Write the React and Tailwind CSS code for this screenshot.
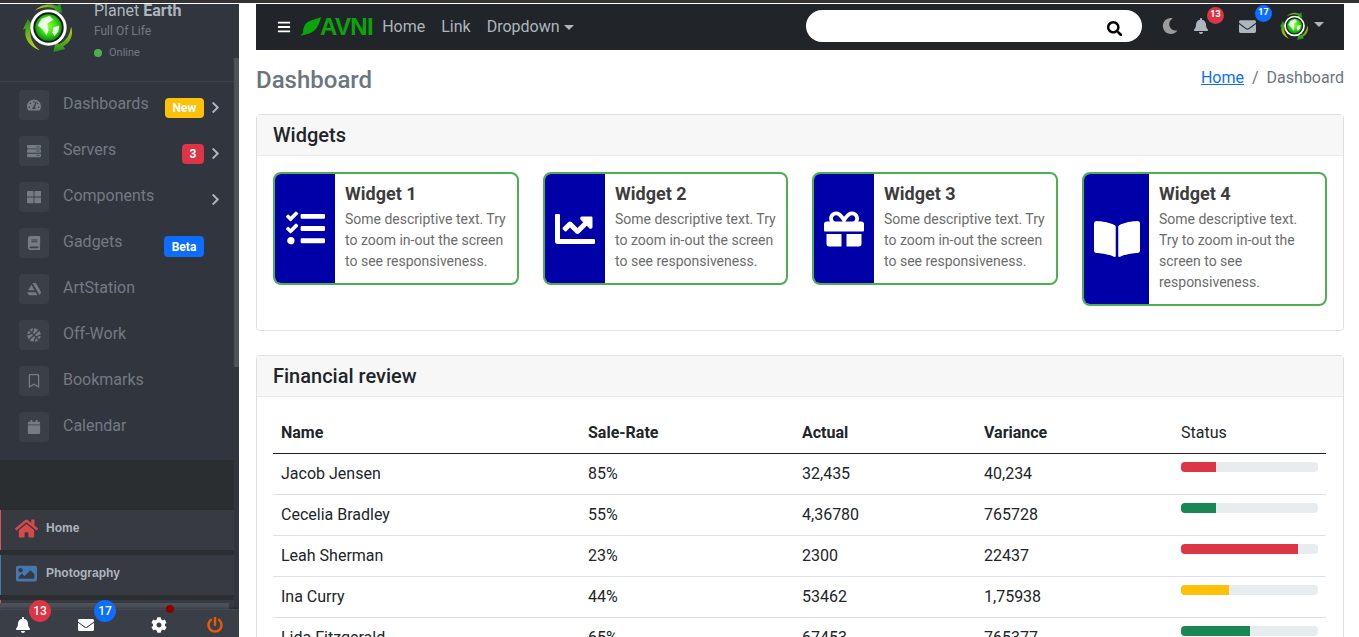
import React from "react";
import { FaBell, FaEnvelope, FaCog, FaPowerOff, FaHome, FaImage, FaMoon, FaSearch, FaTachometerAlt, FaServer, FaThLarge, FaBook, FaArtstation, FaBasketballBall, FaRegBookmark, FaCalendar, FaChevronRight, FaBars, FaTasks, FaChartLine, FaGift, FaBookOpen } from "react-icons/fa";

function Earth({ size }) {
  return (
    <svg width={size} height={size} viewBox="0 0 52 52">
      <defs>
        <radialGradient id="globe" cx="50%" cy="45%" r="55%">
          <stop offset="0%" stopColor="#8dff2e" />
          <stop offset="60%" stopColor="#33d80f" />
          <stop offset="100%" stopColor="#0c8a12" />
        </radialGradient>
        <linearGradient id="blade" x1="0" y1="0" x2="1" y2="0">
          <stop offset="0%" stopColor="#c9d41a" />
          <stop offset="100%" stopColor="#1d8f1d" />
        </linearGradient>
        <linearGradient id="bladeL" x1="0" y1="1" x2="0" y2="0">
          <stop offset="0%" stopColor="#c9d41a" />
          <stop offset="100%" stopColor="#1d8f1d" />
        </linearGradient>
        <linearGradient id="bladeR" x1="0" y1="0" x2="0" y2="1">
          <stop offset="0%" stopColor="#c9d41a" />
          <stop offset="100%" stopColor="#1d8f1d" />
        </linearGradient>
      </defs>
      <path d="M12 8 C18 1 28 0 35 3 L38 0 L40 10 L30 9 L33 6 C26 3 18 4 12 8Z" fill="url(#blade)" />
      <path d="M17 48 C7 45 0 35 3 26 L0 27 L5 16 L11 25 L8 25 C6 34 10 43 17 48Z" fill="url(#bladeL)" />
      <path d="M49 24 C52 33 48 41 41 44 L43 47 L31 50 L33 40 L37 42 C44 39 48 32 49 24Z" fill="url(#bladeR)" />
      <circle cx="26" cy="25" r="18.5" fill="#fff" />
      <circle cx="26" cy="25" r="15.5" fill="#1a1a1a" />
      <circle cx="26" cy="25" r="13.5" fill="url(#globe)" />
      <path d="M19 16 L27 13 L31 17 L25 21 L26 28 L24 33 L20 27 L15 23Z" fill="#eafbe4" />
      <path d="M31 25 L37 23 L36 29 L32 34 L30 30Z" fill="#eafbe4" />
    </svg>
  );
}

const nav = [
  ["Dashboards", FaTachometerAlt, "New", "chev"],
  ["Servers", FaServer, "3", "chev"],
  ["Components", FaThLarge, null, "chev"],
  ["Gadgets", FaBook, "Beta", null],
  ["ArtStation", FaArtstation, null, null],
  ["Off-Work", FaBasketballBall, null, null],
  ["Bookmarks", FaRegBookmark, null, null],
  ["Calendar", FaCalendar, null, null],
];

const badgeCls = {
  New: "bg-[#ffc107] w-[39px] h-5",
  "3": "bg-[#dc3545] w-[22px] h-5",
  Beta: "bg-[#0d6efd] w-10 h-[21px]",
};

function NavItem({ label, Icon, badge, chev }) {
  return (
    <div className="h-[46px] flex items-start pl-[19px] relative">
      <div className="w-[30px] h-[30px] rounded bg-[#3a3f48] flex items-center justify-center text-[#767c85] text-[14px] shrink-0">
        <Icon />
      </div>
      <span className="ml-[14px] text-[16px] leading-[28px] text-[#747a83]">{label}</span>
      <div className="flex-1" />
      {badge && (
        <span className={`${badgeCls[badge]} mt-[8px] rounded text-white font-bold text-[12px] flex items-center justify-center`}>{badge}</span>
      )}
      <span className="w-[30px] pl-[5px] pt-[11px] text-[#adb5bd] text-[13px] h-[30px]">{chev && <FaChevronRight />}</span>
    </div>
  );
}

function Sidebar() {
  return (
    <aside className="w-[239px] shrink-0 h-[633px] bg-[#31353e] relative overflow-hidden flex flex-col">
      <div className="h-[78px] flex shrink-0 pl-[23px] border-b border-[#3d424b]">
        <div className="mt-[-1px]"><Earth size={51} /></div>
        <div className="ml-[20px] mt-[-3px]">
          <div className="text-[16px] leading-[20px] text-[#adb5bd]">Planet <b className="font-bold">Earth</b></div>
          <div className="text-[12px] leading-[16px] mt-[2px] text-[#747a83]">Full Of Life</div>
          <div className="text-[11px] leading-[14px] mt-[7px] text-[#747a83] flex items-center">
            <span className="w-[8px] h-[8px] rounded-full bg-[#4caf50] mr-[7px]" />Online
          </div>
        </div>
      </div>
      <div className="flex-1 flex flex-col pr-[5px] pt-[8px] relative">
        <nav className="flex flex-col">
          {nav.map(([l, I, b, c]) => <NavItem key={l} label={l} Icon={I} badge={b} chev={c} />)}
        </nav>
        <div className="mt-[2px] h-[50px] bg-[#2b2e31] shrink-0" />
        <div className="bg-[#2b2e31] flex flex-col gap-[5px] flex-1">
          <div className="h-[40px] bg-[#373a41] border-l border-[#d9534f] flex items-center pl-[14px] pb-[4px]">
            <FaHome className="text-[#d9484a] text-[23px]" />
            <span className="ml-[8px] text-[12px] font-bold text-[#adb5bd] font-['Liberation_Sans']">Home</span>
          </div>
          <div className="h-[40px] bg-[#373a41] border-l border-[#3d79b4] flex items-center pl-[15px] pb-[4px]">
            <FaImage className="text-[#4279b0] text-[21px]" />
            <span className="ml-[9px] text-[12px] font-bold text-[#adb5bd] font-['Liberation_Sans']">Photography</span>
          </div>
          <div className="flex-1 bg-[#373a41] border-l border-[#d9534f]" />
        </div>
      </div>
      {/* scrollbars */}
      <div className="absolute right-0 top-[54px] w-[5px] h-[309px] bg-[#4d525b]" />
      <div className="absolute left-0 bottom-[28px] w-[229px] h-[6px] bg-[#4d525b]" />
      {/* footer */}
      <div className="absolute left-0 right-0 bottom-0 h-[28px] bg-[#3a3e47] shadow-[0_0_4px_rgba(0,0,0,.5)] border-t border-[#44484f]">
        <FooterIcon left={15} Icon={FaBell} badge="13" bc="bg-[#dc3545]" bl={29} />
        <FooterIcon left={78} Icon={FaEnvelope} badge="17" bc="bg-[#0d6efd]" bl={94} />
        <FooterIcon left={151} Icon={FaCog} />
        <span className="absolute left-[166px] top-[-5px] w-2 h-2 rounded-full bg-[#8b0000]" />
        <FooterIcon left={207} Icon={FaPowerOff} color="text-[#e8590c]" />
      </div>
    </aside>
  );
}

function FooterIcon({ left, Icon, badge, bc, bl, color = "text-white" }) {
  return (
    <>
      <Icon className={`absolute top-[7px] text-[16px] ${color}`} style={{ left }} />
      {badge && (
        <span className={`absolute top-[-10px] w-[22px] h-[22px] rounded-full ${bc} text-white text-[12px] font-medium flex items-center justify-center`} style={{ left: bl }}>{badge}</span>
      )}
    </>
  );
}

function Navbar() {
  return (
    <header className="h-[46px] bg-[#212529] flex items-center text-[#adb5bd] text-[16px] shrink-0">
      <FaBars className="ml-[21px] text-[14px] text-white" />
      <svg className="ml-[9px] shrink-0" width="21" height="20" viewBox="0 0 21 20">
        <path d="M1 19 C5 17 7 15 9 12 C7 15 5 17 3 18 C4 18 5 18 7 17 C14 16 19 10 21 0 C15 3 8 3 5 8 C3 11 3 14 3 16 L1 18Z" fill="#0aa50a" />
      </svg>
      <span className="font-['Liberation_Sans'] font-bold text-[24px] text-[#0aa50a] tracking-[-0.6px] -ml-[1px]">AVNI</span>
      <span className="ml-[9px]">Home</span>
      <span className="ml-[16px]">Link</span>
      <span className="ml-[16px]">Dropdown</span>
      <span className="ml-[4px] border-x-[5px] border-x-transparent border-t-[5px] border-t-[#adb5bd]" />
      <div className="flex-1" />
      <div className="w-[336px] h-8 rounded-full bg-white mr-[20px] mt-[-3px] flex items-center justify-end pr-[20px] text-black text-[15.5px]">
        <FaSearch className="mt-[6px]" />
      </div>
      <FaMoon className="text-[#9b9b9b] text-[16px] mr-[15px] mt-[-3px]" />
      <div className="relative mr-[30px]">
        <FaBell className="text-[#adb5bd] text-[16px] mt-[-3px]" />
        <span className="absolute top-[-14px] left-[14px] w-[17px] h-[17px] rounded-full bg-[#dc3545] text-white text-[9px] font-bold flex items-center justify-center">13</span>
      </div>
      <div className="relative mr-[24px]">
        <FaEnvelope className="text-[#adb5bd] text-[17px] mt-[-2px]" />
        <span className="absolute top-[-15px] left-[16px] w-[17px] h-[17px] rounded-full bg-[#0d6efd] text-white text-[9px] font-bold flex items-center justify-center">17</span>
      </div>
      <div className="mt-[-1px]"><Earth size={29} /></div>
      <span className="ml-[5px] mr-[20px] border-x-[5px] border-x-transparent border-t-[5px] border-t-[#adb5bd] mt-[-6px]" />
    </header>
  );
}

const text = "Some descriptive text. Try to zoom in-out the screen to see responsiveness.";
const widgets = [
  ["Widget 1", FaTasks, "w-[246px]", "w-[60px]", 39],
  ["Widget 2", FaChartLine, "w-[245px]", "w-[60px]", 40],
  ["Widget 3", FaGift, "w-[246px]", "w-[60px]", 40],
  ["Widget 4", FaBookOpen, "w-[245px]", "w-[65px]", 46],
];

function Widget({ title, Icon, w, iw, isz }) {
  return (
    <div className={`${w} border-2 border-[#4caf50] rounded-[8px] flex overflow-hidden bg-white`}>
      <div className={`${iw} bg-[#0000a8] flex items-center justify-center text-white shrink-0`}>
        <Icon style={{ fontSize: isz }} />
      </div>
      <div className="pl-[10px] pr-[8px] pt-[8px] pb-[11px] flex-1 min-w-0">
        <div className="text-[18px] leading-[24px] font-bold text-[#3d3d3d]">{title}</div>
        <p className="text-[14px] leading-[21px] text-[#6c6c6c] mt-[3px]">{text}</p>
      </div>
    </div>
  );
}

const rows = [
  ["Jacob Jensen", "85%", "32,435", "40,234", "bg-[#dc3545]", "w-[25.5%]"],
  ["Cecelia Bradley", "55%", "4,36780", "765728", "bg-[#198754]", "w-[25.5%]"],
  ["Leah Sherman", "23%", "2300", "22437", "bg-[#dc3545]", "w-[85.5%]"],
  ["Ina Curry", "44%", "53462", "1,75938", "bg-[#ffc107]", "w-[35%]"],
  ["Lida Fitzgerald", "65%", "67453", "765377", "bg-[#198754]", "w-[50%]"],
];

function Card({ title, children, cls }) {
  return (
    <section className={`border border-[#dfdfdf] rounded bg-white ${cls}`}>
      <div className="h-[41px] bg-[#f7f7f7] border-b border-[#ececec] px-4 flex items-center text-[20px] font-medium text-[#212529]">{title}</div>
      {children}
    </section>
  );
}

export default function App() {
  return (
    <div className="w-[1359px] h-[637px] overflow-hidden bg-white font-['Roboto',sans-serif] flex flex-col">
      <div className="h-[3px] bg-[#333] shrink-0" />
      <div className="h-[1px] bg-white shrink-0" />
      <div className="flex flex-1 min-h-0">
        <Sidebar />
        <main className="flex-1 min-w-0 pl-[17px] pr-[15px] overflow-hidden">
          <Navbar />
          <div className="h-[64px] flex items-start justify-between">
            <h1 className="text-[24px] font-medium text-[#6c757d] leading-[28px] mt-[16px]">Dashboard</h1>
            <div className="text-[16px] leading-[24px] mt-[16px] text-[#6c757d]">
              <a className="text-[#0d6efd] underline">Home</a><span className="mx-2">/</span>Dashboard
            </div>
          </div>
          <Card title="Widgets" cls="h-[217px]">
            <div className="flex items-start justify-between pt-[16px] px-4">
              {widgets.map(([t, I, w, iw, s]) => <Widget key={t} title={t} Icon={I} w={w} iw={iw} isz={s} />)}
            </div>
          </Card>
          <Card title="Financial review" cls="mt-[24px]">
            <div className="px-4 pt-[16px]">
              <table className="w-[1053px] text-[16px] text-[#212529] table-fixed border-collapse">
                <colgroup>
                  <col className="w-[307px]" /><col className="w-[214px]" /><col className="w-[182px]" /><col className="w-[197px]" /><col />
                </colgroup>
                <thead>
                  <tr className="h-[40px] border-b border-[#212529] text-left">
                    <th className="px-2 font-bold">Name</th><th className="px-2 font-bold">Sale-Rate</th><th className="px-2 font-bold">Actual</th><th className="px-2 font-bold">Variance</th><th className="px-2 font-normal">Status</th>
                  </tr>
                </thead>
                <tbody>
                  {rows.map((r) => (
                    <tr key={r[0]} className="h-[41px] border-b border-[#dee2e6]">
                      <td className="px-2">{r[0]}</td><td className="px-2">{r[1]}</td><td className="px-2">{r[2]}</td><td className="px-2">{r[3]}</td>
                      <td className="px-2 align-top pt-[8px]">
                        <div className="h-[10px] rounded bg-[#e9ecef] overflow-hidden">
                          <div className={`h-full ${r[4]} ${r[5]}`} />
                        </div>
                      </td>
                    </tr>
                  ))}
                </tbody>
              </table>
            </div>
          </Card>
        </main>
      </div>
    </div>
  );
}
